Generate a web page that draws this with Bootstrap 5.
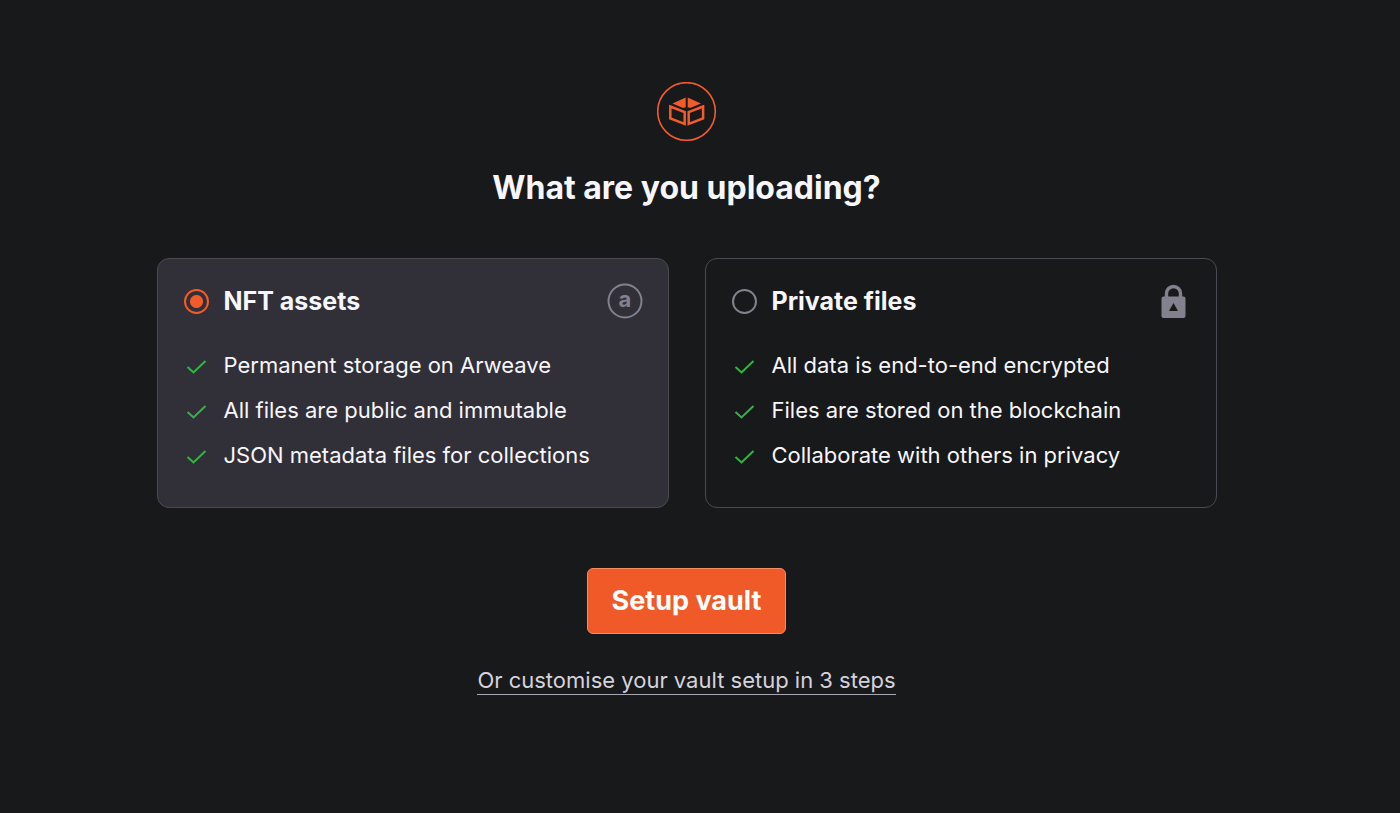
<!DOCTYPE html>
<html lang="en">
<head>
<meta charset="utf-8">
<meta name="viewport" content="width=device-width, initial-scale=1">
<title>Vault setup</title>
<link href="https://cdn.jsdelivr.net/npm/bootstrap@5.3.0/dist/css/bootstrap.min.css" rel="stylesheet">
<style>
body { background: #18191b; color: #f7f6fa; font-family: Inter, sans-serif; font-size: 22px; line-height: 28px; }
.setup { padding: 82px 27px 48px 0; }
.setup-inner { max-width: 1060px; }
.setup-title { font-size: 32px; line-height: 40px; font-weight: 700; margin: 26px 0 50px; }
.options { gap: 36px; }
.option { flex: 1 1 0; background: transparent; color: inherit; border: 1px solid #4b4a53; border-radius: 12px; padding: 24px 25px 38px 26px; }
.option:has(input:checked) { background: #312f38; }
.option-head { height: 36px; margin-bottom: 32px; }
.option-name { font-size: 25px; line-height: 36px; font-weight: 700; }
.option .form-check-input { width: 25px; height: 25px; margin: 0 15px 0 0; background: none; border: 2px solid #84818e; box-shadow: none; }
.option .form-check-input:checked { border-color: #f25c2a; background: radial-gradient(circle, #f25c2a 6px, transparent 7px); }
.option-list { display: grid; gap: 17px; }
.tick { width: 25px; height: 28px; margin-right: 15px; }
.btn-setup { --bs-btn-color: #fff; --bs-btn-bg: #f05a28; --bs-btn-border-color: #f58c64; --bs-btn-hover-color: #fff; --bs-btn-hover-bg: #df4f20; --bs-btn-hover-border-color: #f58c64; --bs-btn-font-size: 27px; --bs-btn-line-height: 36px; --bs-btn-font-weight: 700; --bs-btn-padding-x: 24px; --bs-btn-padding-y: 14px; --bs-btn-border-radius: 6px; margin: 60px 0 32px; }
.customise { color: #d5d2dc; border-bottom: 1px solid #aaa7b3; }
</style>
</head>
<body>
<main class="setup">
  <form class="setup-inner mx-auto d-flex flex-column align-items-center">
    <svg width="60" height="60" viewBox="0 0 60 60" fill="none" stroke="#f25c2a" aria-hidden="true">
      <circle cx="29.5" cy="29.5" r="28.8" stroke-width="1.6"/>
      <path d="M28.7 15.5V25.500L25.500 25.800 15.500 21.500ZM30.700 15.500V25.500L33.900 25.800 43.900 21.500Z" fill="#f25c2a" stroke="none"/>
      <path d="M13.300 24.500 27.700 30V42L13.300 36.500ZM46.100 24.500 31.700 30V42L46.100 36.500Z" stroke-width="2.500"/>
    </svg>
    <h1 class="setup-title text-center">What are you uploading?</h1>
    <div class="options d-flex flex-column flex-md-row w-100">
      <section class="option card">
        <div class="option-head d-flex align-items-center">
          <input class="form-check-input flex-shrink-0" type="radio" name="kind" id="nft" checked>
          <label class="option-name stretched-link" for="nft">NFT assets</label>
          <svg class="ms-auto" width="36" height="36" viewBox="0 0 36 36" aria-hidden="true">
            <circle cx="18" cy="18" r="16.5" fill="none" stroke="#84818e" stroke-width="2"/>
            <text x="18" y="24" text-anchor="middle" font-family="Inter, sans-serif" font-size="22" font-weight="700" fill="#84818e">a</text>
          </svg>
        </div>
        <ul class="option-list list-unstyled mb-0">
          <li class="d-flex"><svg class="tick flex-shrink-0" viewBox="0 0 25 28"><path d="m3.5 16 6 5.5L21.5 10" fill="none" stroke="#35b348" stroke-width="2"/></svg>Permanent storage on Arweave</li>
          <li class="d-flex"><svg class="tick flex-shrink-0" viewBox="0 0 25 28"><path d="m3.5 16 6 5.5L21.5 10" fill="none" stroke="#35b348" stroke-width="2"/></svg>All files are public and immutable</li>
          <li class="d-flex"><svg class="tick flex-shrink-0" viewBox="0 0 25 28"><path d="m3.5 16 6 5.5L21.5 10" fill="none" stroke="#35b348" stroke-width="2"/></svg>JSON metadata files for collections</li>
        </ul>
      </section>
      <section class="option card">
        <div class="option-head d-flex align-items-center">
          <input class="form-check-input flex-shrink-0" type="radio" name="kind" id="private">
          <label class="option-name stretched-link" for="private">Private files</label>
          <svg class="ms-auto" width="36" height="36" viewBox="0 0 36 36" aria-hidden="true">
            <path d="M11.5 15V10.500a7 7 0 0 1 14 0V15" fill="none" stroke="#84818e" stroke-width="3.400"/>
            <path fill-rule="evenodd" d="M8.500 13.500h20a2 2 0 0 1 2 2V33a2 2 0 0 1-2 2H8.500a2 2 0 0 1-2-2V15.500a2 2 0 0 1 2-2ZM18.500 20l-4.500 8h9Z" fill="#84818e"/>
          </svg>
        </div>
        <ul class="option-list list-unstyled mb-0">
          <li class="d-flex"><svg class="tick flex-shrink-0" viewBox="0 0 25 28"><path d="m3.5 16 6 5.5L21.5 10" fill="none" stroke="#35b348" stroke-width="2"/></svg>All data is end-to-end encrypted</li>
          <li class="d-flex"><svg class="tick flex-shrink-0" viewBox="0 0 25 28"><path d="m3.5 16 6 5.5L21.5 10" fill="none" stroke="#35b348" stroke-width="2"/></svg>Files are stored on the blockchain</li>
          <li class="d-flex"><svg class="tick flex-shrink-0" viewBox="0 0 25 28"><path d="m3.5 16 6 5.5L21.5 10" fill="none" stroke="#35b348" stroke-width="2"/></svg>Collaborate with others in privacy</li>
        </ul>
      </section>
    </div>
    <button class="btn btn-setup" type="submit">Setup vault</button>
    <a class="customise text-decoration-none" href="#customise">Or customise your vault setup in 3 steps</a>
  </form>
</main>
<script src="https://cdn.jsdelivr.net/npm/bootstrap@5.3.0/dist/js/bootstrap.bundle.min.js"></script>
</body>
</html>
